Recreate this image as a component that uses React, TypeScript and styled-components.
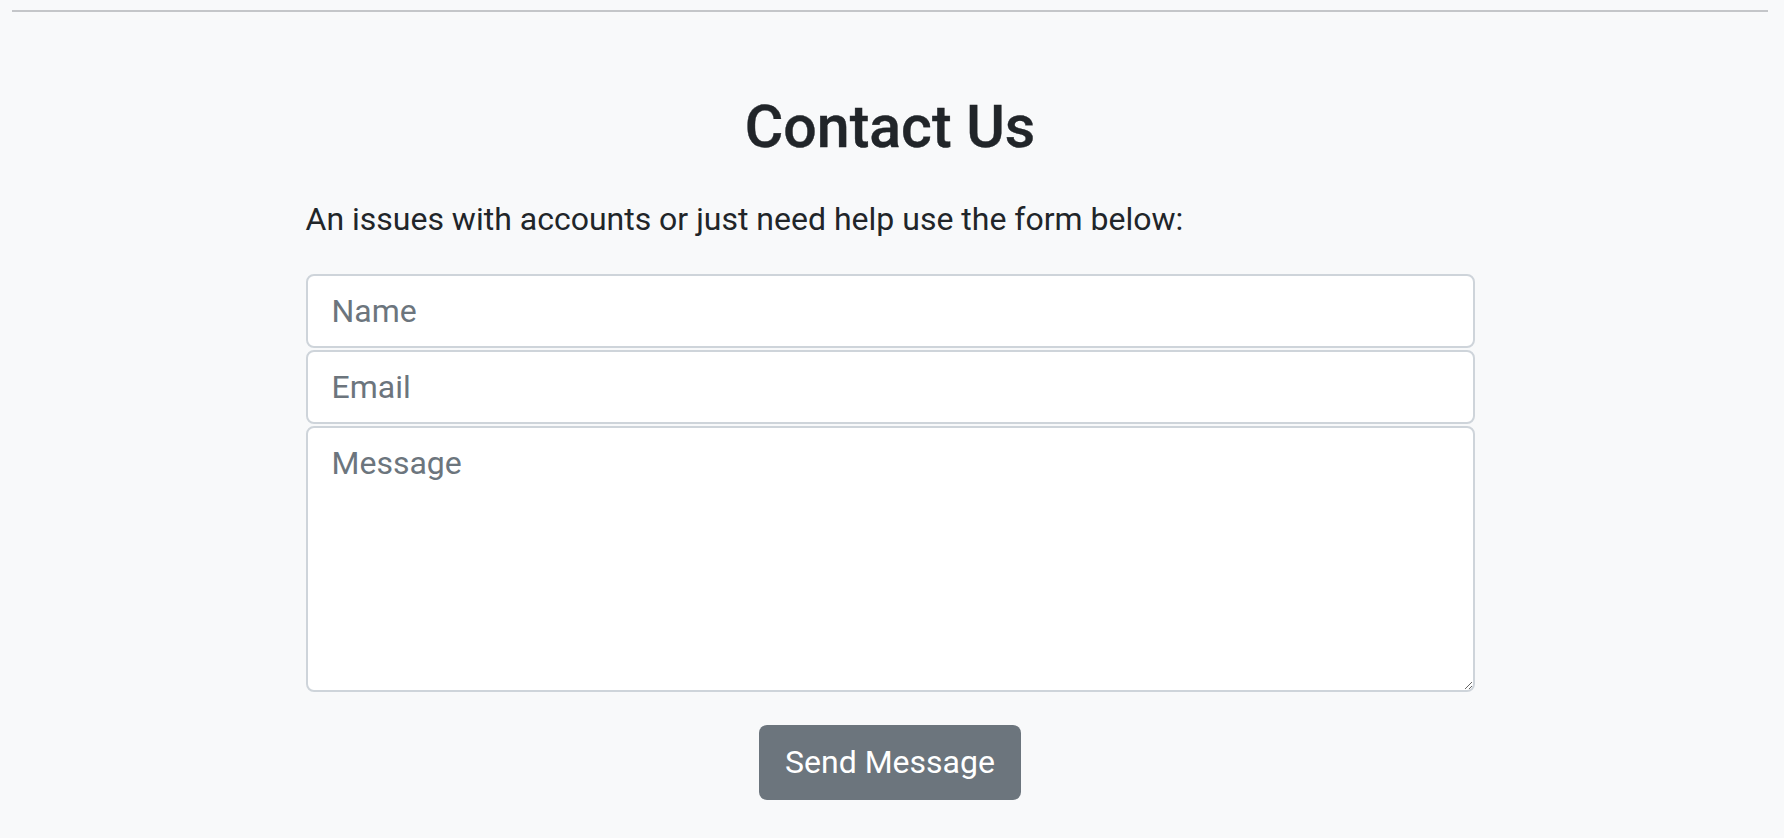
import * as React from "react";
import styled, { createGlobalStyle } from "styled-components";

const GlobalStyle = createGlobalStyle`
  html, body {
    margin: 0;
    padding: 0;
    background-color: #f8f9fa;
    font-family: Roboto, "Liberation Sans", sans-serif;
    color: #212529;
  }
  * {
    box-sizing: border-box;
  }
`;

const Rule = styled.hr`
  margin: 10px 16px 0 12px;
  height: 2px;
  border: 0;
  background-color: #c4c6c9;
`;

const Page = styled.main`
  display: flex;
  flex-direction: column;
  align-items: center;
  padding: 0 4px 40px 0;
`;

const Title = styled.h2`
  margin: 80px 0 0;
  font-size: 59px;
  font-weight: 500;
  line-height: 1.2;
  -webkit-text-stroke: 0.4px #212529;
`;

const Section = styled.section`
  width: 1169px;
  display: flex;
  flex-direction: column;
`;

const Lead = styled.p`
  margin: 32px 0 31px;
  font-size: 32px;
  line-height: 1.5;
`;

const Form = styled.form`
  display: flex;
  flex-direction: column;
  gap: 2px;
`;

const fieldStyles = `
  width: 100%;
  font-family: Roboto, "Liberation Sans", sans-serif;
  font-size: 32px;
  line-height: 1.5;
  color: #212529;
  background-color: #fff;
  border: 2px solid #ced4da;
  border-radius: 8px;
  padding: 11px 24px;
  outline: none;
  &::placeholder {
    color: #6c757d;
    opacity: 1;
  }
`;

const Field = styled.input`
  ${fieldStyles}
  height: 74px;
`;

const MessageField = styled.textarea`
  ${fieldStyles}
  height: 266px;
  resize: vertical;
  display: block;
`;

const Actions = styled.div`
  display: flex;
  justify-content: center;
  margin-top: 31px;
`;

const SendButton = styled.button`
  height: 75px;
  padding: 0 26px;
  border: 0;
  border-radius: 8px;
  background-color: #6c757d;
  color: #fff;
  font-family: Roboto, "Liberation Sans", sans-serif;
  font-size: 32px;
  line-height: 1.5;
  cursor: pointer;
`;

export default function App() {
  return (
    <>
      <GlobalStyle />
      <Rule />
      <Page>
        <Title>Contact Us</Title>
        <Section>
          <Lead>An issues with accounts or just need help use the form below:</Lead>
          <Form onSubmit={(e) => e.preventDefault()}>
            <Field type="text" placeholder="Name" />
            <Field type="email" placeholder="Email" />
            <MessageField placeholder="Message" />
            <Actions>
              <SendButton type="submit">Send Message</SendButton>
            </Actions>
          </Form>
        </Section>
      </Page>
    </>
  );
}
